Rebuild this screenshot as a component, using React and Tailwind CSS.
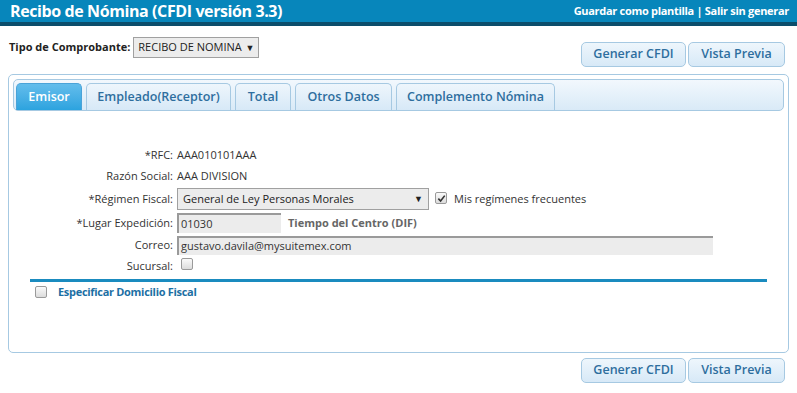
import React from 'react';

const btn =
  'h-[25px] px-0 whitespace-nowrap rounded-[5px] border border-[#a6c9e2] bg-gradient-to-b from-[#eef6fc] to-[#d7e9f7] text-[#2e6e9e] text-[12.5px] font-semibold leading-none';

const Buttons = () => (
  <div className="flex justify-end gap-[2px] pr-[12px]">
    <button className={`${btn} w-[105px]`}>Generar CFDI</button>
    <button className={`${btn} w-[97px]`}>Vista Previa</button>
  </div>
);

const tabs = [
  ['Emisor', 66],
  ['Empleado(Receptor)', 145],
  ['Total', 56],
  ['Otros Datos', 97],
  ['Complemento Nómina', 159],
];

const Check = ({ checked }) => (
  <span className="inline-flex items-center justify-center w-[12px] h-[12px] rounded-[2px] border border-[#9a9a9a] bg-gradient-to-b from-[#fafafa] to-[#dcdcdc]">
    {checked && (
      <svg width="9" height="9" viewBox="0 0 10 10">
        <path d="M1.5 5.2 L4 7.8 L8.6 1.8" fill="none" stroke="#333" strokeWidth="1.8" />
      </svg>
    )}
  </span>
);

const Label = ({ children }) => (
  <div className="w-[164px] shrink-0 text-right pr-[4px] text-[#333] whitespace-nowrap">{children}</div>
);

export default function App() {
  return (
    <div className="w-[797px] h-[393px] bg-white text-[12px] font-['Open_Sans',sans-serif] text-[#333] overflow-hidden">
      <div className="h-[26px] bg-[#0786bb] border-b-[4px] border-[#0b4d6b] flex items-center justify-between pl-[10px] pr-[8px]">
        <span className="text-white font-bold text-[16px] tracking-[-0.4px]">Recibo de Nómina (CFDI versión 3.3)</span>
        <span className="text-white font-bold text-[11px] tracking-[-0.3px]">Guardar como plantilla | Salir sin generar</span>
      </div>

      <div className="flex items-start justify-between pl-[9px] pt-[11px]">
        <div className="flex items-center gap-[3px]">
          <span className="font-bold text-[11px] text-[#222]">Tipo de Comprobante:</span>
          <div className="h-[21px] w-[126px] border border-[#a0a0a0] bg-[#ececec] flex items-center justify-between px-[4px] text-[11px] text-[#222]">
            <span>RECIBO DE NOMINA</span>
            <span className="text-[9px]">▼</span>
          </div>
        </div>
        <div className="pt-[5px]">
          <Buttons />
        </div>
      </div>

      <div className="mx-[8px] mt-[7px] h-[279px] w-[781px] border border-[#a6c9e2] rounded-[5px] p-[4px]">
        <div className="h-[32px] rounded-[5px] border border-[#a6c9e2] bg-gradient-to-b from-[#f2f8fd] to-[#d9eaf7] flex items-end gap-[4px] pl-[2px]">
          {tabs.map(([t, w], i) => (
            <div
              key={t}
              style={{ width: w }}
              className={`h-[27px] rounded-t-[5px] border border-b-0 flex items-center justify-center text-[12.5px] font-semibold whitespace-nowrap ${
                i === 0
                  ? 'bg-gradient-to-b from-[#62bdec] to-[#2ba3df] border-[#4aa3d8] text-white'
                  : 'bg-gradient-to-b from-[#eef6fc] to-[#d7e9f7] border-[#a6c9e2] text-[#2e6e9e]'
              }`}
            >
              {t}
            </div>
          ))}
        </div>

        <div className="pt-[34px] flex flex-col text-[11px]">
          <div className="flex items-center h-[21px]">
            <Label>*RFC:</Label>
            <span>AAA010101AAA</span>
          </div>
          <div className="flex items-center h-[21px]">
            <Label>Razón Social:</Label>
            <span>AAA DIVISION</span>
          </div>
          <div className="flex items-center h-[24px]">
            <Label>*Régimen Fiscal:</Label>
            <div className="h-[22px] w-[252px] border border-[#a0a0a0] bg-[#ececec] flex items-center justify-between px-[5px] text-[#222]">
              <span>General de Ley Personas Morales</span>
              <span className="text-[9px]">▼</span>
            </div>
            <span className="ml-[6px]"><Check checked /></span>
            <span className="ml-[7px]">Mis regímenes frecuentes</span>
          </div>
          <div className="flex items-center h-[22px] mt-[1px]">
            <Label>*Lugar Expedición:</Label>
            <div className="h-[20px] w-[104px] border-t-2 border-l-2 border-[#9a9a9a] bg-[#ececec] flex items-center px-[2px]">01030</div>
            <span className="ml-[7px] font-bold text-[#666]">Tiempo del Centro (DIF)</span>
          </div>
          <div className="flex items-center h-[22px]">
            <Label>Correo:</Label>
            <div className="h-[19px] w-[536px] border-t-2 border-l-2 border-[#9a9a9a] bg-[#ececec] flex items-center px-[2px]">gustavo.davila@mysuitemex.com</div>
          </div>
          <div className="flex items-center h-[20px]">
            <Label>Sucursal:</Label>
            <span className="ml-[4px]"><Check /></span>
          </div>
          <div className="mx-[17px] mt-[3px] h-[3px] bg-[#1a8bbf]" />
          <div className="flex items-center h-[20px] pl-[22px]">
            <Check />
            <span className="ml-[11px] font-bold text-[#1c6fa4] tracking-[-0.3px]">Especificar Domicilio Fiscal</span>
          </div>
        </div>
      </div>

      <div className="pt-[5px]">
        <Buttons />
      </div>
    </div>
  );
}
